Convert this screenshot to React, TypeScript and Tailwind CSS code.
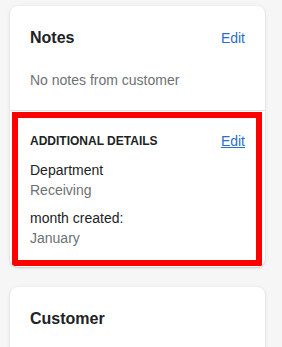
export default function App() {
  const font = { fontFamily: '"Liberation Sans", Arial, sans-serif' };
  return (
    <div className="h-[347px] w-[282px] overflow-hidden bg-[#f6f6f7] pt-[6px] pl-[10px]" style={font}>
      <div className="w-[255px] overflow-hidden rounded-[8px] bg-white shadow-[0_0_5px_rgba(23,24,24,0.05),0_1px_2px_rgba(0,0,0,0.15)]">
        <div className="p-5">
          <div className="flex h-6 items-center justify-between">
            <h2 className="text-[16px] font-bold leading-6 text-[#202223]">Notes</h2>
            <span className="text-[14px] leading-5 text-[#2c6ecb]">Edit</span>
          </div>
          <p className="mt-5 text-[14px] leading-5 text-[#6d7175]">No notes from customer</p>
        </div>
        <div className="border-t border-[#e1e3e5] pt-px pb-px">
          <div className="ml-[2px] mr-[3px] border-[6px] border-[#ff0000] pt-[13px] pb-[12px] pl-[12px] pr-[11px]">
            <div className="flex h-5 items-center justify-between">
              <h3 className="text-[12px] font-bold uppercase leading-4 text-[#202223]">Additional details</h3>
              <span className="text-[14px] leading-5 text-[#2c6ecb] underline">Edit</span>
            </div>
            <div className="mt-[9px] flex flex-col gap-2">
              <div>
                <p className="text-[14px] leading-5 text-[#202223]">Department</p>
                <p className="text-[14px] leading-5 text-[#6d7175]">Receiving</p>
              </div>
              <div>
                <p className="text-[14px] leading-5 text-[#202223]">month created:</p>
                <p className="text-[14px] leading-5 text-[#6d7175]">January</p>
              </div>
            </div>
          </div>
        </div>
      </div>
      <div className="mt-5 h-[80px] w-[255px] rounded-[8px] bg-white p-5 shadow-[0_0_5px_rgba(23,24,24,0.05),0_1px_2px_rgba(0,0,0,0.15)]">
        <h2 className="text-[16px] font-bold leading-6 text-[#202223]">Customer</h2>
      </div>
    </div>
  );
}
